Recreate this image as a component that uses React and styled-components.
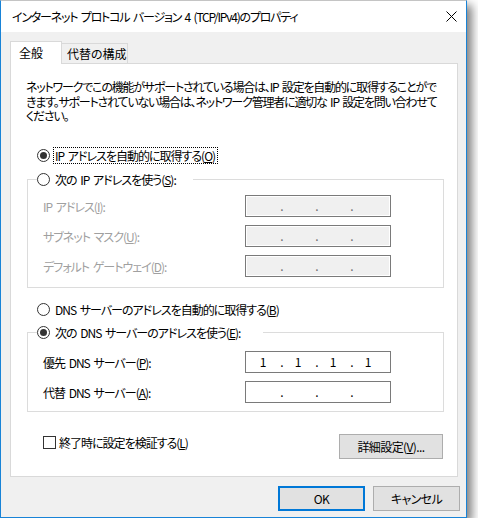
import styled, { createGlobalStyle } from "styled-components"

const GlobalStyle = createGlobalStyle`
  body {
    margin: 0;
    background: #ffffff;
    font-family: "Noto Sans CJK JP", "Noto Sans", sans-serif;
    font-size: 12px;
    font-feature-settings: "palt" 1;
    letter-spacing: -1px;
    word-spacing: 2px;
    color: #000000;
  }
  * { box-sizing: border-box; }
`

const Window = styled.div`
  width: 467px;
  height: 518px;
  border: 1px solid #1883d7;
  border-top-color: #c4c4c4;
  background: #f0f0f0;
  box-shadow: 5px 5px 9px rgba(0, 0, 0, 0.5);
  display: flex;
  flex-direction: column;
`

const TitleBar = styled.div`
  height: 31px;
  background: #ffffff;
  display: flex;
  align-items: center;
  justify-content: space-between;
  padding: 0 9px 0 11px;
  line-height: 15px;
  letter-spacing: -1.2px;
`

const Body = styled.div`
  flex: 1;
  display: flex;
  flex-direction: column;
  padding: 9px 6px 0 9px;
`

const Tabs = styled.div`
  display: flex;
  align-items: flex-end;
  height: 22px;
`

const Tab = styled.div`
  position: relative;
  z-index: 1;
  height: ${p => (p.$active ? "23px" : "20px")};
  width: ${p => p.$w}px;
  margin-bottom: ${p => (p.$active ? "-1px" : "0")};
  border: 1px solid #d9d9d9;
  border-bottom: none;
  border-left: ${p => (p.$active ? "1px solid #d9d9d9" : "none")};
  background: ${p => (p.$active ? "#ffffff" : "#f0f0f0")};
  padding: ${p => (p.$active ? "3px 0 0 8px" : "2px 0 0 5px")};
  line-height: 15px;
  letter-spacing: 0;
`

const Panel = styled.div`
  width: 448px;
  height: 414px;
  border: 1px solid #d9d9d9;
  background: #ffffff;
  padding: 16px 13px 0 16px;
  display: flex;
  flex-direction: column;
`

const Intro = styled.p`
  margin: 0 0 0 -1px;
  line-height: 14.5px;
  white-space: nowrap;
  letter-spacing: -1.2px;
`

const RadioRow = styled.label`
  display: flex;
  align-items: center;
  height: 16px;
  margin-top: ${p => p.$top || 0}px;
  margin-left: ${p => (p.$inset ? 0 : 10)}px;
  gap: 4px;
  line-height: 15px;
  white-space: nowrap;
`

const RadioCircle = styled.span`
  width: 13px;
  height: 13px;
  border-radius: 50%;
  border: 1px solid #333333;
  background: #ffffff;
  display: flex;
  align-items: center;
  justify-content: center;
  flex-shrink: 0;

  &::after {
    content: "";
    width: 7px;
    height: 7px;
    border-radius: 50%;
    background: ${p => (p.$checked ? "#333333" : "transparent")};
  }
`

const Caption = styled.span`
  padding: 0 2px 0 1px;
  outline: ${p => (p.$focus ? "1px dotted #000000" : "none")};
  line-height: 15px;
`

const Group = styled.fieldset`
  margin: ${p => p.$top}px 0 0 0;
  padding: ${p => p.$pt}px 0 ${p => p.$pb}px 9px;
  border: 1px solid #dcdcdc;
  min-width: 0;
`

const Legend = styled.legend`
  padding: 0;
  width: ${p => p.$w}px;
  height: 16px;
`

const Fields = styled.div`
  display: grid;
  grid-template-columns: 202px 146px;
  row-gap: 8px;
  padding-left: 6px;
`

const FieldLabel = styled.div`
  height: 22px;
  display: flex;
  align-items: center;
  padding-top: 2px;
  color: ${p => (p.$disabled ? "#a0a0a0" : "#000000")};
  white-space: nowrap;
`

const IpBox = styled.div`
  height: 22px;
  border: 1px solid #7a7a7a;
  background: ${p => (p.$disabled ? "#f0f0f0" : "#ffffff")};
  box-shadow: ${p => (p.$disabled ? "inset 0 0 0 1px #ffffff" : "none")};
  display: flex;
  align-items: center;
  padding-left: 3px;
  line-height: 15px;
  letter-spacing: 0;
  color: ${p => (p.$disabled ? "#6d6d6d" : "#000000")};
`

const Octet = styled.span`
  width: 31px;
  padding-right: 3px;
  text-align: center;
`

const Dot = styled.span`
  width: 4px;
  text-align: center;
`

const BottomRow = styled.div`
  display: flex;
  align-items: flex-start;
  justify-content: space-between;
  margin-top: 22px;
  padding-right: 1px;
`

const CheckRow = styled.label`
  display: flex;
  align-items: center;
  gap: 3px;
  margin: 1px 0 0 16px;
  height: 16px;
  line-height: 15px;
`

const CheckBox = styled.span`
  width: 13px;
  height: 13px;
  border: 1px solid #333333;
  background: #ffffff;
`

const Button = styled.button`
  width: ${p => p.$w}px;
  height: ${p => p.$h}px;
  background: #e1e1e1;
  border: ${p => (p.$default ? "2px solid #0078d7" : "1px solid #adadad")};
  font: inherit;
  font-size: 12px;
  line-height: 15px;
  letter-spacing: -0.6px;
  color: #000000;
  padding: 0;
`

const Footer = styled.div`
  display: flex;
  justify-content: flex-end;
  gap: 8px;
  margin-top: 9px;
`

function Radio({ checked, focus, children, top, inset }) {
  return (
    <RadioRow $top={top} $inset={inset}>
      <RadioCircle $checked={checked} />
      <Caption $focus={focus}>{children}</Caption>
    </RadioRow>
  )
}

function IpField({ label, value, disabled }) {
  const parts = value ? value.split(".") : ["", "", "", ""]
  return (
    <>
      <FieldLabel $disabled={disabled}>{label}</FieldLabel>
      <IpBox $disabled={disabled}>
        {parts.map((p, i) => (
          <span key={i} style={{ display: "contents" }}>
            <Octet>{p}</Octet>
            {i < 3 && <Dot>.</Dot>}
          </span>
        ))}
      </IpBox>
    </>
  )
}

export default function App() {
  return (
    <>
      <GlobalStyle />
      <Window>
        <TitleBar>
          <span>インターネット プロトコル バージョン 4 (TCP/IPv4)のプロパティ</span>
          <svg width="11" height="11" viewBox="0 0 11 11">
            <path d="M0.5 0.5 L10.5 10.5 M10.5 0.5 L0.5 10.5" stroke="#000" strokeWidth="1" />
          </svg>
        </TitleBar>
        <Body>
          <Tabs>
            <Tab $active $w={52}>全般</Tab>
            <Tab $w={66}>代替の構成</Tab>
          </Tabs>
          <Panel>
            <Intro>
              ネットワークでこの機能がサポートされている場合は、IP 設定を自動的に取得することがで<br />
              きます。サポートされていない場合は、ネットワーク管理者に適切な IP 設定を問い合わせて<br />
              ください。
            </Intro>

            <Radio checked focus top={24}>
              IP アドレスを自動的に取得する(<u>O</u>)
            </Radio>

            <Group $top={8} $pt={7} $pb={10}>
              <Legend $w={156}>
                <Radio inset>
                  次の IP アドレスを使う(<u>S</u>):
                </Radio>
              </Legend>
              <Fields>
                <IpField disabled label={<>IP アドレス(<u>I</u>):</>} />
                <IpField disabled label={<>サブネット マスク(<u>U</u>):</>} />
                <IpField disabled label={<>デフォルト ゲートウェイ(<u>D</u>):</>} />
              </Fields>
            </Group>

            <Radio top={14}>
              DNS サーバーのアドレスを自動的に取得する(<u>B</u>)
            </Radio>

            <Group $top={7} $pt={10} $pb={8}>
              <Legend $w={226}>
                <Radio checked inset>
                  次の DNS サーバーのアドレスを使う(<u>E</u>):
                </Radio>
              </Legend>
              <Fields>
                <IpField label={<>優先 DNS サーバー(<u>P</u>):</>} value="1.1.1.1" />
                <IpField label={<>代替 DNS サーバー(<u>A</u>):</>} />
              </Fields>
            </Group>

            <BottomRow>
              <CheckRow>
                <CheckBox />
                <span>終了時に設定を検証する(<u>L</u>)</span>
              </CheckRow>
              <Button $w={104} $h={25}>詳細設定(<u>V</u>)...</Button>
            </BottomRow>
          </Panel>
          <Footer>
            <Button $default $w={87} $h={25}>OK</Button>
            <Button $w={87} $h={25}>キャンセル</Button>
          </Footer>
        </Body>
      </Window>
    </>
  )
}
